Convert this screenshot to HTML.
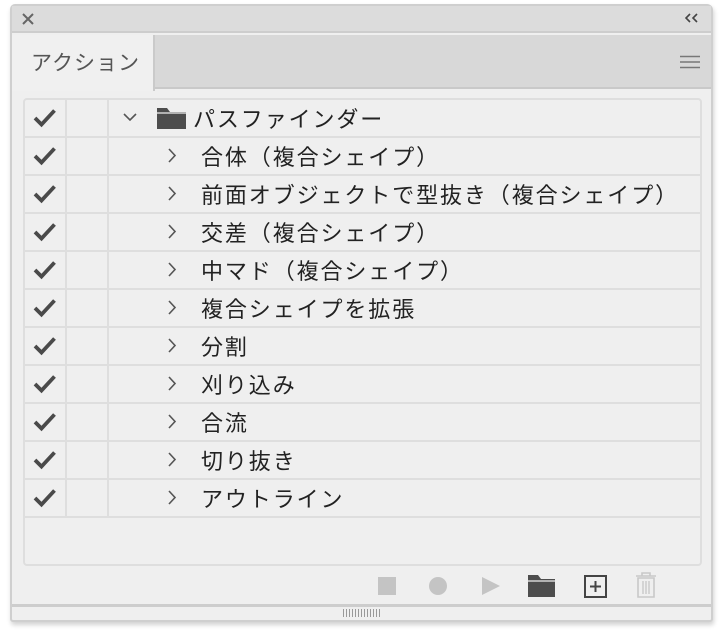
<!DOCTYPE html>
<html><head><meta charset="utf-8"><style>
*{margin:0;padding:0;box-sizing:border-box}
body{width:724px;height:636px;background:#fff;position:relative;overflow:hidden;font-family:"Liberation Sans","Noto Sans CJK JP",sans-serif}
.panel{position:absolute;left:10px;top:4px;width:703px;height:618px;background:#efefef;border:2px solid #cfcfcf;border-radius:5px 6px 3px 3px;box-shadow:1px 3px 5px rgba(0,0,0,.18)}
.title{position:absolute;left:0;top:0;right:0;height:27px;background:#dcdcdc;border-bottom:2px solid #cdcdcd}
.tabrow{position:absolute;left:0;top:29px;right:0;height:54px;background:#d8d8d8;border-bottom:2px solid #c9c9c9}
.tab{position:absolute;left:0;top:0;width:143px;height:56px;background:#f0f0f0;border-right:2px solid #cacaca;font-size:21px;color:#555;padding:12px 0 0 19px;letter-spacing:1px}
.list{position:absolute;left:11px;top:92px;width:679px;height:468px;border:2px solid #dedede;border-radius:4px;background:#efefef}
.row{position:absolute;left:0;width:675px;height:38px;border-bottom:2px solid #dedede}
.c1{position:absolute;left:40px;top:0;width:2px;height:36px;background:#dedede}
.c2{position:absolute;left:82px;top:0;width:2px;height:36px;background:#dedede}
.chk{position:absolute;left:8px;top:8px}
.txt{position:absolute;top:2px;font-size:22px;color:#222;white-space:nowrap;letter-spacing:1.9px}
.chev{position:absolute;top:10px}
.bottombar{position:absolute;left:0;right:0;top:598px;height:3px;background:#cdcdcd}
</style></head><body>
<div class="panel">
 <div class="title">
  <svg style="position:absolute;left:10px;top:7px" width="12" height="12"><path d="M1 1L11 11M11 1L1 11" stroke="#666" stroke-width="2"/></svg>
  <svg style="position:absolute;left:673px;top:7px" width="14" height="10"><path d="M5 1L1 5L5 9M12 1L8 5L12 9" stroke="#444" stroke-width="1.6" fill="none"/></svg>
 </div>
 <div class="tabrow">
  <div class="tab">アクション</div>
  <svg style="position:absolute;left:668px;top:20px" width="20" height="14"><path d="M0 1.5H20M0 7H20M0 12.5H20" stroke="#777" stroke-width="1.6"/></svg>
 </div>
 <div class="list" id="list"></div>
 <svg style="position:absolute;left:365px;top:570px" width="20" height="20"><rect x="1" y="1" width="18" height="18" fill="#c4c4c4"/></svg>
 <svg style="position:absolute;left:416px;top:570px" width="20" height="20"><circle cx="10" cy="10" r="9" fill="#c4c4c4"/></svg>
 <svg style="position:absolute;left:469px;top:570px" width="20" height="20"><path d="M1 1L19 10L1 19Z" fill="#c4c4c4"/></svg>
 <svg style="position:absolute;left:516px;top:569px" width="28" height="22"><path d="M0 0H10L13 4H27V22H0Z" fill="#4d4d4d"/><path d="M0 6H27" stroke="#efefef" stroke-width="1.2"/></svg>
 <svg style="position:absolute;left:572px;top:569px" width="24" height="24"><rect x="1" y="1" width="21" height="21" fill="none" stroke="#444" stroke-width="2"/><path d="M11.5 6V17M6 11.5H17" stroke="#444" stroke-width="2"/></svg>
 <svg style="position:absolute;left:623px;top:566px" width="22" height="26"><path d="M1 4H21M7 4V1H15V4M3 6H19V25H3Z" fill="none" stroke="#c8c8c8" stroke-width="1.6"/><path d="M8 9V22M11 9V22M14 9V22" stroke="#c8c8c8" stroke-width="1.4"/></svg>
 <div class="bottombar"></div>
 <svg style="position:absolute;left:330px;top:603px" width="40" height="8"><g stroke="#999" stroke-width="1"><path d="M1.5 0V8M4.5 0V8M7.5 0V8M10.5 0V8M13.5 0V8M16.5 0V8M19.5 0V8M22.5 0V8M25.5 0V8M28.5 0V8M31.5 0V8M34.5 0V8M37.5 0V8"/></g></svg>
</div>
<script>
var items=["合体（複合シェイプ）","前面オブジェクトで型抜き（複合シェイプ）","交差（複合シェイプ）","中マド（複合シェイプ）","複合シェイプを拡張","分割","刈り込み","合流","切り抜き","アウトライン"];
var h='';
var chk='<svg class="chk" width="24" height="20"><path d="M2 10L8.5 16.5L21.5 2.5" stroke="#4a4a4a" stroke-width="3.8" fill="none"/></svg>';
h+='<div class="row" style="top:0">'+chk+'<div class="c1"></div><div class="c2"></div>'+
'<svg class="chev" style="left:98px;top:13px" width="14" height="9"><path d="M1 1L7 7L13 1" stroke="#555" stroke-width="1.6" fill="none"/></svg>'+
'<svg style="position:absolute;left:132px;top:8px" width="30" height="22"><path d="M0 0H10L13 4H29V21H0Z" fill="#4d4d4d"/><path d="M0 5H29" stroke="#efefef" stroke-width="1.2"/></svg>'+
'<div class="txt" style="left:168px">パスファインダー</div></div>';
for(var i=0;i<items.length;i++){
h+='<div class="row" style="top:'+(38*(i+1))+'px">'+chk+'<div class="c1"></div><div class="c2"></div>'+
'<svg class="chev" style="left:143px" width="9" height="15"><path d="M1 1L7 7.5L1 14" stroke="#555" stroke-width="1.6" fill="none"/></svg>'+
'<div class="txt" style="left:176px">'+items[i]+'</div></div>';}
document.getElementById('list').innerHTML=h;
</script>
</body></html>
